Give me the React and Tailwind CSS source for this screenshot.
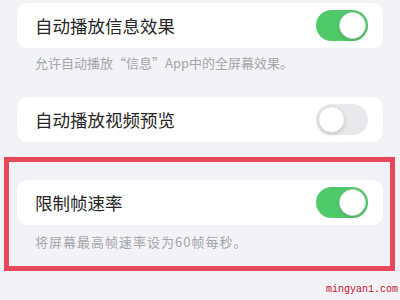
const Toggle = ({ on }) => (
  <div
    className={
      on
        ? 'w-[52px] h-[31px] rounded-full bg-[#4fc96a] flex items-center justify-end px-[2px]'
        : 'w-[52px] h-[31px] rounded-full bg-[#e9e9eb] flex items-center justify-start px-[2px]'
    }
  >
    <div className="w-[27px] h-[27px] rounded-full bg-white border border-[#d8d8d8] shadow-[0_2px_4px_rgba(0,0,0,0.12)]"></div>
  </div>
);

const Row = ({ label, on }) => (
  <div className="h-[45px] rounded-[10px] bg-white flex items-center justify-between pl-[18px] pr-[15px]">
    <span className="text-[17.5px] leading-none text-[#262626]">{label}</span>
    <Toggle on={on} />
  </div>
);

const App = () => {
  return (
    <div
      className="relative w-[400px] h-[300px] overflow-hidden bg-[#f2f2f7] px-[17px] pt-[3px]"
      style={{ fontFamily: '"Noto Sans CJK SC", "Noto Sans", sans-serif' }}
    >
      <Row label="自动播放信息效果" on />
      <p className="mt-[6px] pl-[18px] text-[13px] leading-[18px] text-[#a5a5aa]">
        允许自动播放“信息”App中的全屏幕效果。
      </p>

      <div className="mt-[25px]">
        <Row label="自动播放视频预览" on={false} />
      </div>

      {/* Highlighted section */}
      <div className="relative mt-[38px]">
        <Row label="限制帧速率" on />
        <p className="mt-[8px] pl-[18px] text-[13px] leading-[18px] tracking-[1px] text-[#a5a5aa]">
          将屏幕最高帧速率设为60帧每秒。
        </p>
        <div className="absolute -top-[23px] -left-[13px] -right-[12px] -bottom-[20px] border-[5px] border-[#e8485c] pointer-events-none"></div>
      </div>

      <span
        className="absolute left-[326px] top-[285px] text-[10px] leading-none text-[#c8102e] whitespace-nowrap"
        style={{ fontFamily: '"Liberation Mono", monospace' }}
      >
        mingyan1.com
      </span>
    </div>
  );
};

export default App;
